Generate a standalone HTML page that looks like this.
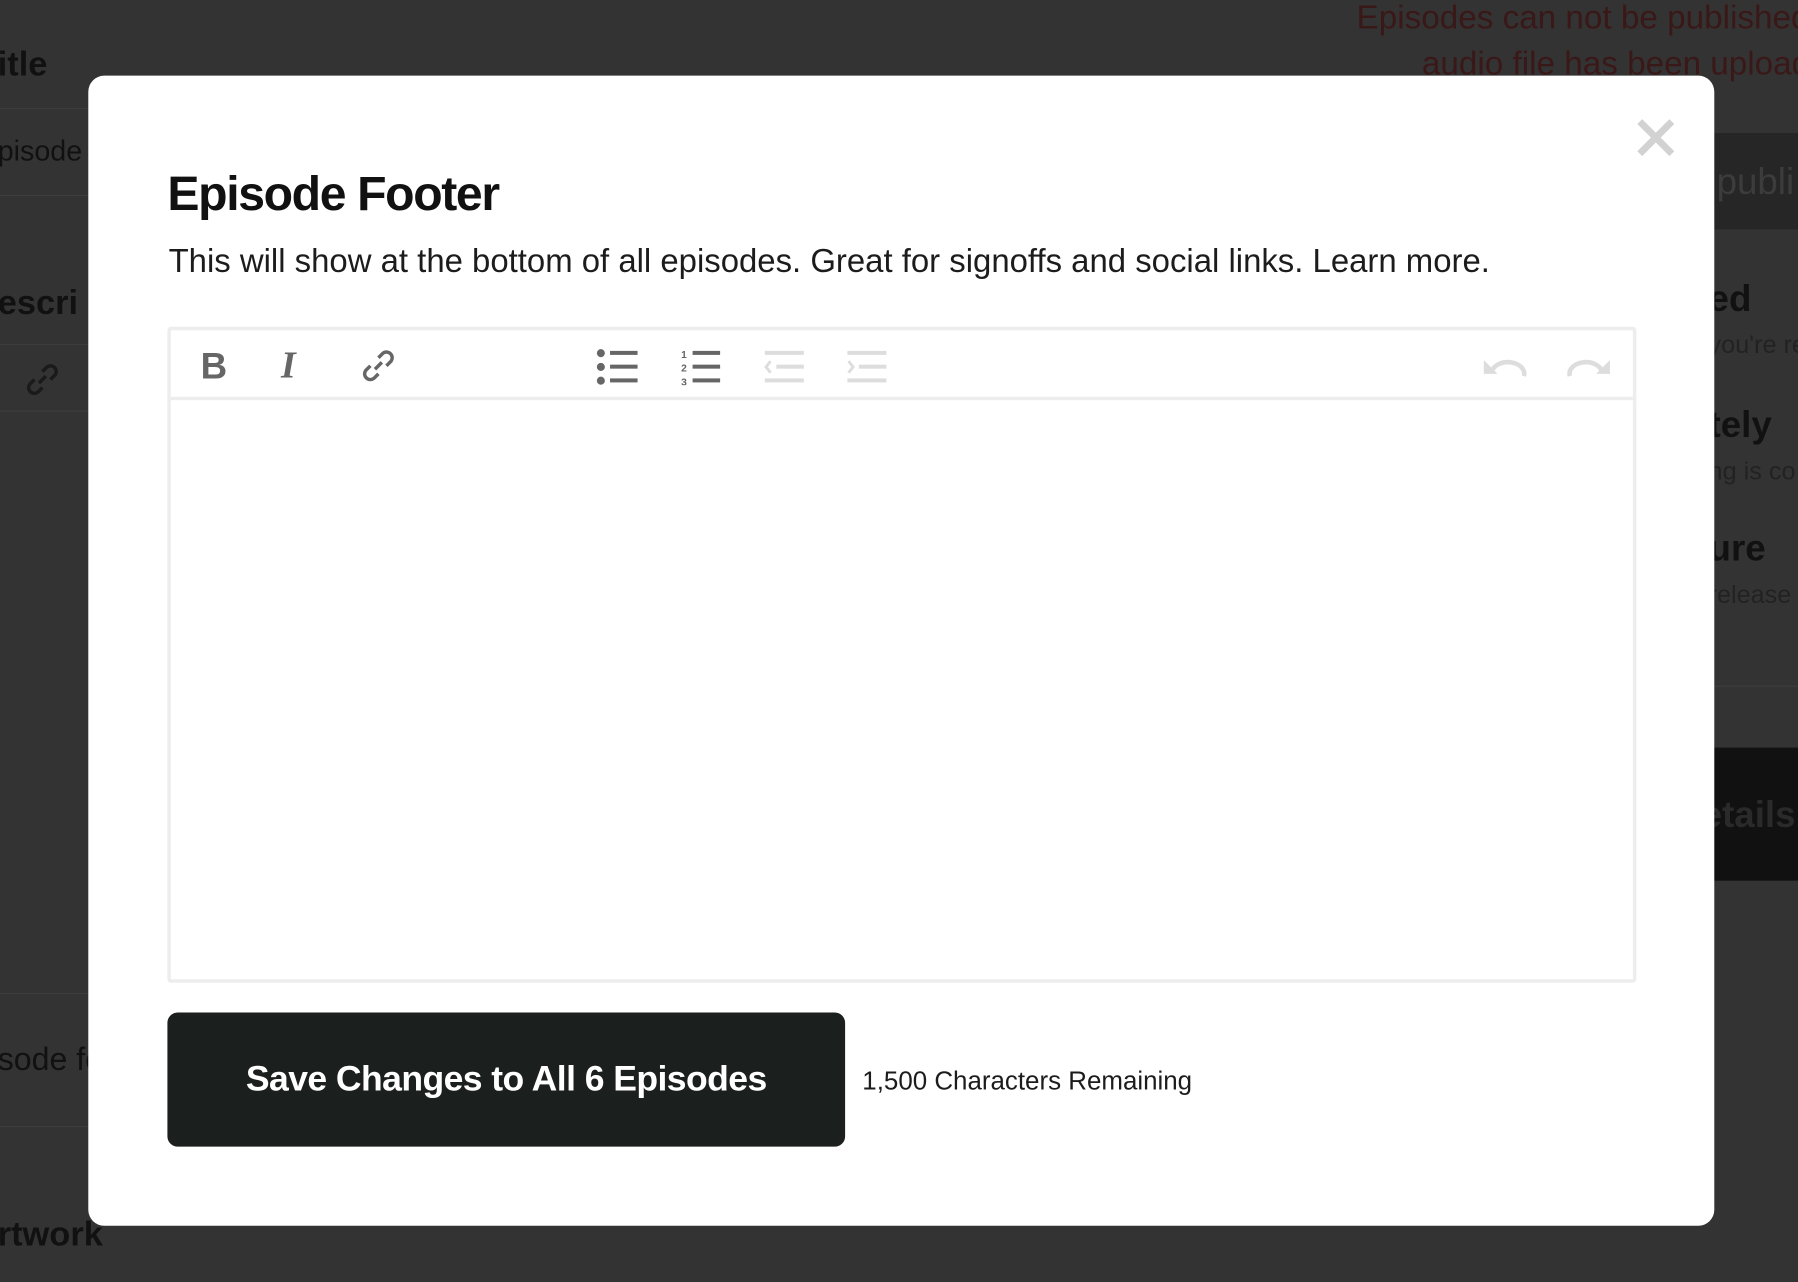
<!DOCTYPE html>
<html><head><meta charset="utf-8"><style>
html,body{margin:0;padding:0;width:1798px;height:1282px;overflow:hidden;background:#333;}
#w{position:absolute;left:0;top:0;width:1568px;height:1118px;transform:scale(1.146684);transform-origin:0 0;font-family:"Liberation Sans",sans-serif;background:#333;}
.a{position:absolute;white-space:nowrap;}
.line{position:absolute;height:1px;background:#3d3d3d;}
</style></head><body><div id="w">
<div class="a" style="left:-2px;top:40px;font-size:30px;font-weight:bold;color:#111;">itle</div>
<div class="line" style="left:0;top:94px;width:80px"></div>
<div class="a" style="left:-2px;top:118px;font-size:25px;color:#111;">pisode</div>
<div class="line" style="left:0;top:170px;width:80px"></div>
<div class="a" style="left:-2px;top:248px;font-size:30px;font-weight:bold;color:#111;">escri</div>
<div class="line" style="left:0;top:300px;width:80px"></div>
<svg style="position:absolute;left:20px;top:314px" width="34" height="34" viewBox="0 0 34 34" fill="none" stroke="#1a1a1a" stroke-width="3"><path d="M14 20l6-6"/><path d="M17 10l4-4a5 5 0 0 1 7 7l-4 4"/><path d="M17 24l-4 4a5 5 0 0 1-7-7l4-4"/></svg>
<div class="line" style="left:0;top:358px;width:80px"></div>
<div class="line" style="left:0;top:866px;width:80px"></div>
<div class="a" style="left:-2px;top:908px;font-size:28px;color:#111;">sode fo</div>
<div class="line" style="left:0;top:982px;width:80px"></div>
<div class="a" style="left:-2px;top:1060px;font-size:30px;font-weight:bold;color:#111;">rtwork</div>
<div class="a" style="left:1183px;top:0px;font-size:29px;color:#3a1818;">Episodes can not be published</div>
<div class="a" style="left:1240px;top:40px;font-size:29px;color:#3a1818;">audio file has been uploaded</div>
<div class="a" style="left:1480px;top:116px;width:100px;height:84px;background:#262626;"></div>
<div class="a" style="left:1497px;top:140px;font-size:32px;color:#3c3c3c;">publi</div>
<div class="a" style="left:1490px;top:242px;font-size:32px;font-weight:bold;color:#111;">ed</div>
<div class="a" style="left:1490px;top:288px;font-size:22px;color:#222;">you're re</div>
<div class="a" style="left:1490px;top:352px;font-size:32px;font-weight:bold;color:#111;">tely</div>
<div class="a" style="left:1490px;top:398px;font-size:22px;color:#222;">ng is co</div>
<div class="a" style="left:1490px;top:460px;font-size:32px;font-weight:bold;color:#111;">ure</div>
<div class="a" style="left:1490px;top:506px;font-size:22px;color:#222;">release</div>
<div class="line" style="left:1490px;top:598px;width:80px"></div>
<div class="a" style="left:1480px;top:652px;width:100px;height:116px;background:#111;"></div>
<div class="a" style="left:1484px;top:692px;font-size:32px;font-weight:bold;color:#2a2a2a;">etails</div>
<div class="a" style="left:77px;top:66px;width:1418px;height:1003px;background:#fff;border-radius:14px;">
 <svg style="position:absolute;left:1350px;top:37px" width="34" height="34" viewBox="0 0 34 34"><path d="M3 3L31 31M31 3L3 31" stroke="#d2d2d2" stroke-width="6"/></svg>
 <div class="a" style="left:69px;top:79px;font-size:42px;font-weight:bold;color:#111;letter-spacing:-1.2px;">Episode Footer</div>
 <div class="a" style="left:70px;top:146px;font-size:28.7px;color:#1c1c1c;">This will show at the bottom of all episodes. Great for signoffs and social links. Learn more.</div>
 <div class="a" style="left:69px;top:219px;width:1275px;height:566px;border:3px solid #ededed;border-radius:3px;">
  <div style="position:absolute;left:0;top:0;width:100%;height:58px;border-bottom:3px solid #ededed;"></div>
  <div class="a" style="left:26px;top:13px;font-size:32px;font-weight:bold;color:#666;">B</div>
  <div class="a" style="left:96px;top:13px;font-size:33px;font-weight:bold;font-style:italic;font-family:'Liberation Serif',serif;color:#666;">I</div>
  <svg style="position:absolute;left:164px;top:14px" width="34" height="34" viewBox="0 0 34 34" fill="none" stroke="#666" stroke-width="3"><path d="M14 20l6-6"/><path d="M17 10l4-4a5 5 0 0 1 7 7l-4 4"/><path d="M17 24l-4 4a5 5 0 0 1-7-7l4-4"/></svg>
  <svg style="position:absolute;left:371px;top:16px" width="40" height="32"><g fill="#666"><circle cx="4" cy="4" r="3.5"/><circle cx="4" cy="16" r="3.5"/><circle cx="4" cy="28" r="3.5"/><rect x="12" y="2" width="24" height="3.5"/><rect x="12" y="14" width="24" height="3.5"/><rect x="12" y="26" width="24" height="3.5"/></g></svg>
  <svg style="position:absolute;left:443px;top:16px" width="40" height="32"><g fill="#666"><rect x="12" y="2" width="24" height="3.5"/><rect x="12" y="14" width="24" height="3.5"/><rect x="12" y="26" width="24" height="3.5"/></g><g fill="#666" font-size="9" font-family="Liberation Sans" font-weight="bold"><text x="2" y="8">1</text><text x="2" y="20">2</text><text x="2" y="32">3</text></g></svg>
  <svg style="position:absolute;left:516px;top:16px" width="40" height="32"><g fill="#ddd"><rect x="2" y="2" width="34" height="3.5"/><rect x="12" y="14" width="24" height="3.5"/><rect x="2" y="26" width="34" height="3.5"/></g><path d="M7 11l-4 5 4 5" stroke="#ddd" stroke-width="2.5" fill="none"/></svg>
  <svg style="position:absolute;left:588px;top:16px" width="40" height="32"><g fill="#ddd"><rect x="2" y="2" width="34" height="3.5"/><rect x="12" y="14" width="24" height="3.5"/><rect x="2" y="26" width="34" height="3.5"/></g><path d="M3 11l4 5-4 5" stroke="#ddd" stroke-width="2.5" fill="none"/></svg>
  <svg style="position:absolute;left:1144px;top:20px" width="40" height="24"><path d="M8 16a14 10 0 0 1 28 4" stroke="#ddd" stroke-width="4" fill="none"/><path d="M1 6v12h12z" fill="#ddd"/></svg>
  <svg style="position:absolute;left:1216px;top:20px" width="40" height="24"><path d="M32 16a14 10 0 0 0-28 4" stroke="#ddd" stroke-width="4" fill="none"/><path d="M39 6v12h-12z" fill="#ddd"/></svg>
 </div>
 <div class="a" style="left:69px;top:817px;width:591px;height:117px;background:#1b1f1e;border-radius:9px;"></div>
 <div class="a" style="left:69px;top:857px;width:591px;text-align:center;font-size:31px;font-weight:bold;color:#fff;letter-spacing:-0.5px;">Save Changes to All 6 Episodes</div>
 <div class="a" style="left:675px;top:864px;font-size:22.6px;color:#1c1c1c;">1,500 Characters Remaining</div>
</div>
</div></body></html>
